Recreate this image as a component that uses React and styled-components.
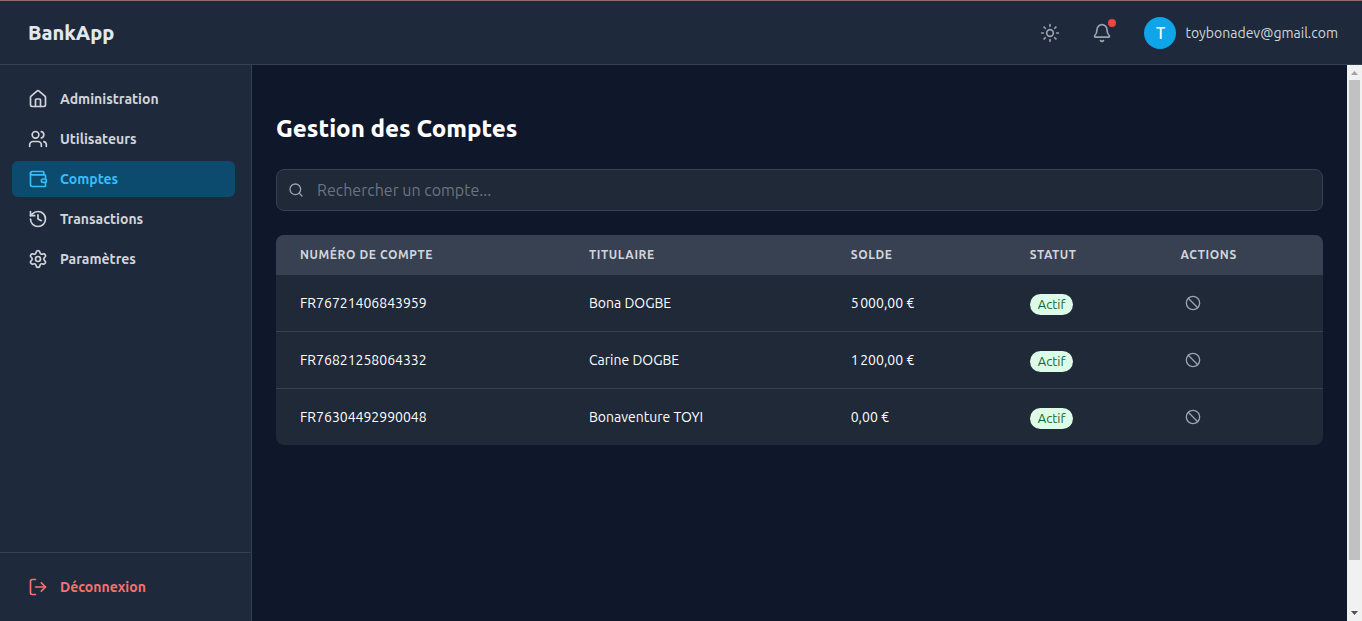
import React from "react";
import styled, { createGlobalStyle, css } from "styled-components";
import { House, Users, Wallet, History, Settings, LogOut, Sun, Bell, Search, Ban } from "lucide-react";

const GlobalStyle = createGlobalStyle`
  *, *::before, *::after { box-sizing: border-box; }
  body {
    margin: 0;
    background: #0f172a;
    color: #fff;
    font-family: Ubuntu, "Noto Sans", sans-serif;
    font-size: 14px;
    line-height: 20px;
  }
  button, input { font: inherit; color: inherit; }
  button { border: 0; background: none; cursor: pointer; }
`;

const Page = styled.div`
  display: flex;
  flex-direction: column;
  height: 100vh;
`;

const Header = styled.header`
  display: flex;
  align-items: center;
  justify-content: space-between;
  flex: none;
  height: 65px;
  padding: 0 24px 0 28px;
  background: #1e293b;
  border-top: 1px solid #8f6c67;
  border-bottom: 1px solid #334155;
`;

const Brand = styled.span`
  font-size: 20px;
  line-height: 28px;
  font-weight: 800;
  color: #e2e8f0;
`;

const HeaderActions = styled.div`
  display: flex;
  align-items: center;
  gap: 16px;
`;

const IconButton = styled.button`
  position: relative;
  display: flex;
  padding: 8px;
  color: #9ca3af;
`;

const RowButton = styled(IconButton)`
  padding: 4px;
`;

const NotificationDot = styled.span`
  position: absolute;
  top: 4px;
  right: 4px;
  width: 8px;
  height: 8px;
  border-radius: 50%;
  background: #ef4444;
`;

const UserButton = styled.button`
  display: flex;
  align-items: center;
  gap: 9px;
  padding: 0 0 0 8px;
  color: #d1d5db;
`;

const Avatar = styled.span`
  display: grid;
  place-items: center;
  width: 32px;
  height: 32px;
  border-radius: 50%;
  background: #0ea5e9;
  color: #fff;
  font-size: 16px;
  font-weight: 500;
`;

const Body = styled.div`
  display: flex;
  flex: 1;
  min-height: 0;
`;

const Sidebar = styled.aside`
  display: flex;
  flex-direction: column;
  flex: none;
  width: 252px;
  background: #1e293b;
  border-right: 1px solid #334155;
`;

const Nav = styled.nav`
  display: flex;
  flex-direction: column;
  flex: 1;
  gap: 4px;
  padding: 16px 16px 16px 12px;
`;

const SidebarFooter = styled.div`
  padding: 16px 16px 16px 12px;
  border-top: 1px solid #334155;
`;

const itemStyle = css`
  display: flex;
  align-items: center;
  gap: 12px;
  width: 100%;
  padding: 8px 16px;
  border-radius: 6px;
  font-weight: 600;
  text-decoration: none;
`;

const NavLink = styled.a`
  ${itemStyle}
  color: ${({ $active }) => ($active ? "#38bdf8" : "#d1d5db")};
  background: ${({ $active }) => ($active ? "#0c4a6e" : "transparent")};
`;

const LogoutButton = styled.button`
  ${itemStyle}
  color: #f87171;
`;

const Main = styled.main`
  flex: 1;
  min-width: 0;
  padding: 48px 24px 24px;
  overflow: hidden;
`;

const Title = styled.h1`
  margin: 0 0 24px;
  font-size: 24px;
  line-height: 32px;
  font-weight: 800;
`;

const SearchBox = styled.label`
  display: flex;
  align-items: center;
  gap: 13px;
  height: 42px;
  margin-bottom: 24px;
  padding: 0 11px;
  border: 1px solid #374151;
  border-radius: 8px;
  background: #1f2937;
  color: #9ca3af;
`;

const SearchInput = styled.input`
  flex: 1;
  min-width: 0;
  padding: 0;
  border: 0;
  outline: 0;
  background: none;
  font-size: 16px;
  line-height: 24px;
  color: #fff;
  &::placeholder { color: #6b7280; opacity: 1; }
`;

const TableCard = styled.div`
  overflow: hidden;
  border-radius: 8px;
  background: #1f2937;
`;

const Table = styled.table`
  width: 100%;
  table-layout: fixed;
  border-collapse: separate;
  border-spacing: 0;
`;

const HeadCell = styled.th`
  width: ${({ $width }) => $width};
  height: 40px;
  padding: 0 24px;
  background: #374151;
  color: #d1d5db;
  font-size: 12px;
  line-height: 16px;
  font-weight: 600;
  letter-spacing: 0.05em;
  text-align: left;
  text-transform: uppercase;
  white-space: nowrap;
`;

const Cell = styled.td`
  height: 57px;
  padding: 0 24px;
  border-bottom: 1px solid #374151;
  white-space: nowrap;
  tr:last-child > & { height: 56px; border-bottom: 0; }
`;

const Badge = styled.span`
  display: inline-block;
  margin-top: 2px;
  padding: 2px 8px;
  border-radius: 11px;
  background: #dcfce7;
  color: #166534;
  font-size: 13px;
  line-height: 17px;
  vertical-align: middle;
`;

const ScrollTrack = styled.div`
  display: flex;
  flex-direction: column;
  align-items: center;
  flex: none;
  width: 15px;
  background: #f1f1f1;
`;

const ScrollArrow = styled.svg`
  flex: none;
  width: 15px;
  height: 15px;
`;

const ScrollRail = styled.div`
  flex: 1;
  width: 11px;
`;

const ScrollThumb = styled.div`
  height: 91.2%;
  background: #c1c1c1;
`;

const links = [
  { label: "Administration", icon: House },
  { label: "Utilisateurs", icon: Users },
  { label: "Comptes", icon: Wallet, active: true },
  { label: "Transactions", icon: History },
  { label: "Paramètres", icon: Settings },
];

const columns = [
  { label: "Numéro de compte", width: "27.6%" },
  { label: "Titulaire", width: "25%" },
  { label: "Solde", width: "17.1%" },
  { label: "Statut", width: "14.4%" },
  { label: "Actions", width: "15.9%" },
];

const accounts = [
  { number: "FR76721406843959", owner: "Bona DOGBE", balance: "5\u202f000,00\u00a0€" },
  { number: "FR76821258064332", owner: "Carine DOGBE", balance: "1\u202f200,00\u00a0€" },
  { number: "FR76304492990048", owner: "Bonaventure TOYI", balance: "0,00\u00a0€" },
];

export default function App() {
  return (
    <Page>
      <GlobalStyle />
      <Header>
        <Brand>BankApp</Brand>
        <HeaderActions>
          <IconButton type="button" aria-label="Changer de thème"><Sun size={20} /></IconButton>
          <IconButton type="button" aria-label="Notifications">
            <Bell size={20} />
            <NotificationDot />
          </IconButton>
          <UserButton type="button">
            <Avatar>T</Avatar>
            <span>toybonadev@gmail.com</span>
          </UserButton>
        </HeaderActions>
      </Header>
      <Body>
        <Sidebar>
          <Nav>
            {links.map(({ label, icon: Icon, active }) => (
              <NavLink key={label} href="#" $active={active} aria-current={active ? "page" : undefined}>
                <Icon size={20} />
                {label}
              </NavLink>
            ))}
          </Nav>
          <SidebarFooter>
            <LogoutButton type="button"><LogOut size={20} />Déconnexion</LogoutButton>
          </SidebarFooter>
        </Sidebar>
        <Main>
          <Title>Gestion des Comptes</Title>
          <SearchBox>
            <Search size={16} />
            <SearchInput type="text" aria-label="Rechercher un compte" placeholder="Rechercher un compte..." />
          </SearchBox>
          <TableCard>
            <Table>
              <thead>
                <tr>
                  {columns.map((c) => <HeadCell key={c.label} scope="col" $width={c.width}>{c.label}</HeadCell>)}
                </tr>
              </thead>
              <tbody>
                {accounts.map((a) => (
                  <tr key={a.number}>
                    <Cell>{a.number}</Cell>
                    <Cell>{a.owner}</Cell>
                    <Cell>{a.balance}</Cell>
                    <Cell><Badge>Actif</Badge></Cell>
                    <Cell>
                      <RowButton type="button" aria-label={`Bloquer le compte ${a.number}`}><Ban size={16} /></RowButton>
                    </Cell>
                  </tr>
                ))}
              </tbody>
            </Table>
          </TableCard>
        </Main>
        <ScrollTrack aria-hidden="true">
          <ScrollArrow viewBox="0 0 15 15"><path d="M4 10h7L7.5 6z" fill="#a3a3a3" /></ScrollArrow>
          <ScrollRail><ScrollThumb /></ScrollRail>
          <ScrollArrow viewBox="0 0 15 15"><path d="M4 5h7L7.5 9z" fill="#505050" /></ScrollArrow>
        </ScrollTrack>
      </Body>
    </Page>
  );
}
